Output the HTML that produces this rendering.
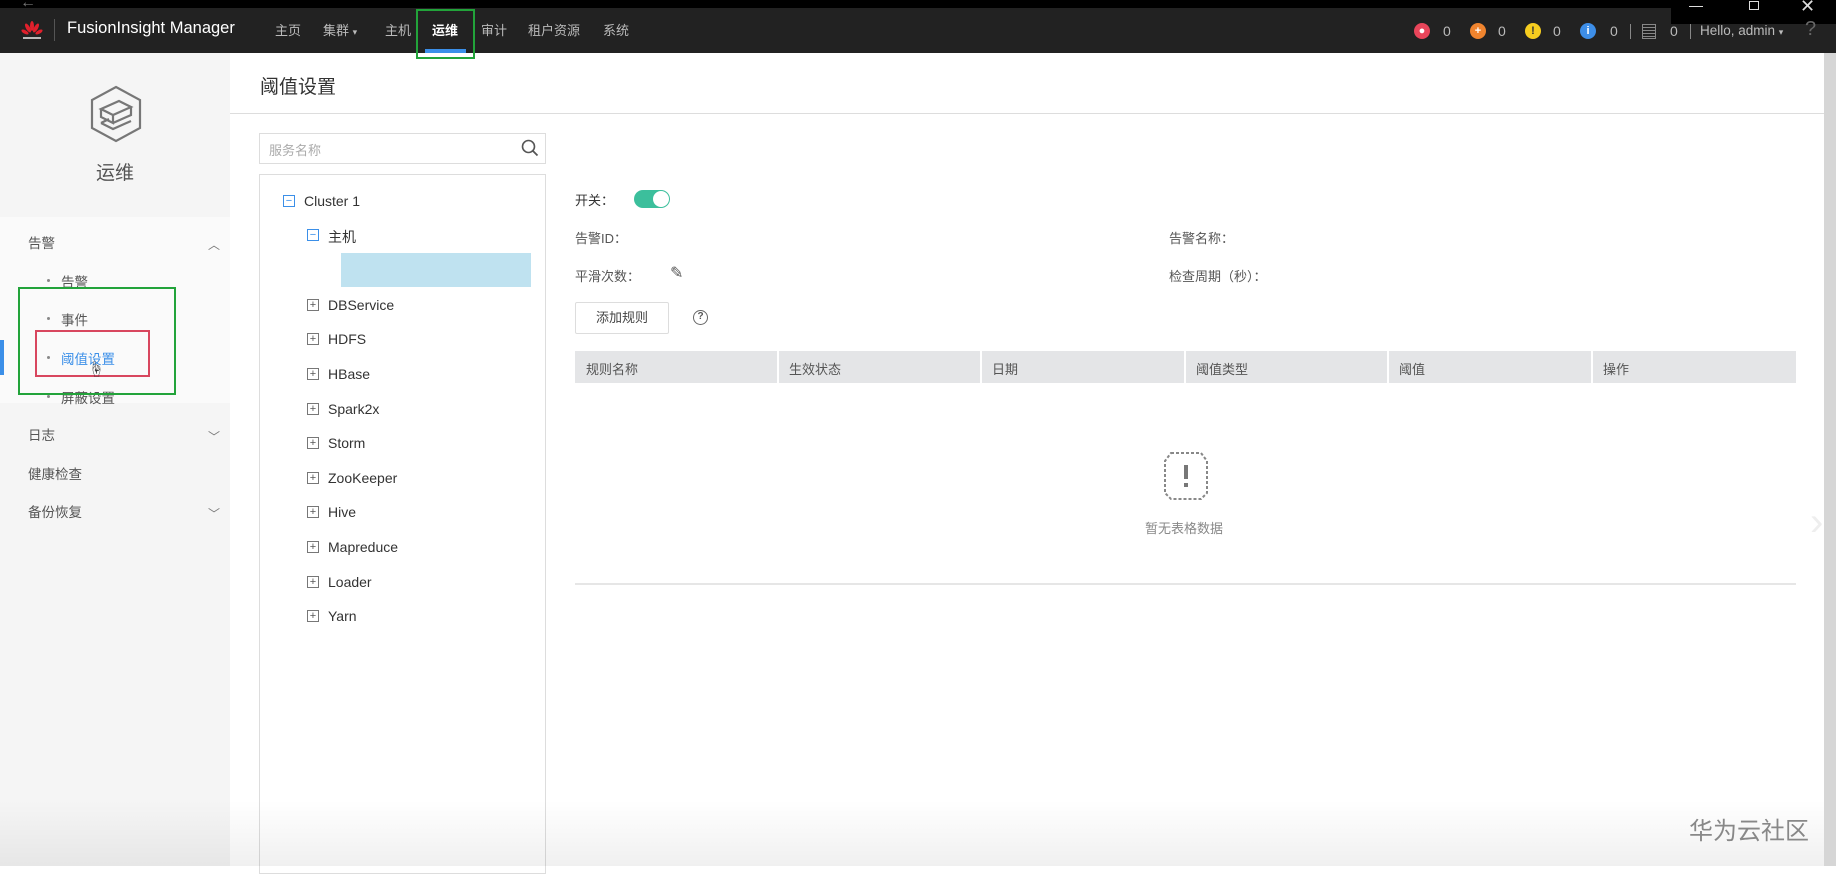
<!DOCTYPE html>
<html><head><meta charset="utf-8"><style>
*{margin:0;padding:0;box-sizing:border-box}
body{width:1836px;height:866px;overflow:hidden;background:#fff;font-family:"Liberation Sans","Noto Sans CJK SC",sans-serif;color:#444;position:relative;font-size:14px}
.a{position:absolute;white-space:nowrap}
.hdr{left:0;top:0;width:1836px;height:53px;background:#222}
.top{left:0;top:0;width:1836px;height:8px;background:#000}
.nav{color:#bbb;font-size:13px;top:20px}
.ic{width:16px;height:16px;border-radius:50%;top:23px;color:#fff;font-size:11px;text-align:center;line-height:16px;font-weight:bold}
.cnt{color:#bbb;font-size:14px;top:23px}
.side{left:0;top:53px;width:230px;height:813px;background:#f5f5f5}
.mi{font-size:13.5px;color:#555}
.dot{width:3px;height:3px;background:#888;border-radius:50%}
.tr{font-size:14px;color:#333}
.tb{width:12px;height:12px;border:1px solid #777;font-size:11px;line-height:10px;text-align:center;color:#555}
.lbl{font-size:13px;color:#555}
.th{font-size:13px;color:#555;top:359px}
.col{top:351px;width:2px;height:32px;background:#fff}
</style></head><body>
<div class="a hdr"></div>
<div class="a top"></div>
<div class="a" style="left:1671px;top:0;width:165px;height:24px;background:#000"></div>
<div class="a" style="left:1689px;top:6px;width:14px;height:1px;background:#ddd"></div>
<div class="a" style="left:1749px;top:1px;width:10px;height:9px;border:1px solid #ddd"></div>
<div class="a" style="left:1800px;top:-4px;color:#ddd;font-size:18px">✕</div>
<div class="a" style="left:20px;top:-6px;color:#777;font-size:16px">←</div>
<svg class="a" style="left:20px;top:20px" width="24" height="24" viewBox="0 0 24 24">
<g fill="#e0202c"><ellipse cx="12" cy="6" rx="2" ry="5"/><ellipse cx="8" cy="8" rx="2" ry="5" transform="rotate(-30 8 8)"/><ellipse cx="16" cy="8" rx="2" ry="5" transform="rotate(30 16 8)"/><ellipse cx="5" cy="12" rx="1.8" ry="4" transform="rotate(-60 5 12)"/><ellipse cx="19" cy="12" rx="1.8" ry="4" transform="rotate(60 19 12)"/></g>
<rect x="3" y="17" width="18" height="2" fill="#bbb"/></svg>
<div class="a" style="left:54px;top:19px;width:1px;height:22px;background:#555"></div>
<div class="a" style="left:67px;top:19px;color:#fff;font-size:16.5px">FusionInsight Manager</div>
<div class="a nav" style="left:275px">主页</div>
<div class="a nav" style="left:323px">集群 <span style="font-size:9px">▾</span></div>
<div class="a nav" style="left:385px">主机</div>
<div class="a nav" style="left:432px;color:#fff;font-weight:bold">运维</div>
<div class="a" style="left:425px;top:49px;width:41px;height:4px;background:#3b8fe8"></div>
<div class="a" style="left:416px;top:9px;width:59px;height:50px;border:2px solid #22a33a"></div>
<div class="a nav" style="left:481px">审计</div>
<div class="a nav" style="left:528px">租户资源</div>
<div class="a nav" style="left:603px">系统</div>
<div class="a ic" style="left:1414px;background:#e8455a">●</div><div class="a cnt" style="left:1443px">0</div>
<div class="a ic" style="left:1470px;background:#f0842e">+</div><div class="a cnt" style="left:1498px">0</div>
<div class="a ic" style="left:1525px;background:#f6cd1f;color:#333">!</div><div class="a cnt" style="left:1553px">0</div>
<div class="a ic" style="left:1580px;background:#3d8ee8">i</div><div class="a cnt" style="left:1610px">0</div>
<div class="a" style="left:1630px;top:24px;width:1px;height:15px;background:#888"></div>
<div class="a" style="left:1642px;top:24px;width:14px;height:15px;border:1px solid #888;background:repeating-linear-gradient(#222 0 2px,#888 2px 3px)"></div>
<div class="a cnt" style="left:1670px">0</div>
<div class="a" style="left:1690px;top:24px;width:1px;height:15px;background:#888"></div>
<div class="a cnt" style="left:1700px;font-size:13.5px">Hello, admin <span style="font-size:9px">▾</span></div>
<div class="a" style="left:1805px;top:18px;color:#666;font-size:20px">?</div>
<div class="a side"></div>
<div class="a" style="left:0;top:217px;width:230px;height:186px;background:#fafafa"></div>
<svg class="a" style="left:89px;top:85px" width="54" height="58" viewBox="0 0 54 58">
<g fill="none" stroke="#777" stroke-width="2.2"><polygon points="27,2 51,15 51,43 27,56 3,43 3,15"/>
<path d="M12,24 L30,16 L42,22 L24,30 Z M12,24 L12,32 L24,38 L24,30 M24,38 L42,30 L42,22 M12,38 L24,44 L42,36 M12,38 L20,34"/></g></svg>
<div class="a" style="left:96px;top:158px;font-size:19px;color:#555">运维</div>
<div class="a mi" style="left:28px;top:232px">告警</div>
<div class="a" style="left:208px;top:236px;color:#777;font-size:12px">︿</div>
<div class="a dot" style="left:47px;top:279px"></div><div class="a mi" style="left:61px;top:271px">告警</div>
<div class="a dot" style="left:47px;top:317px"></div><div class="a mi" style="left:61px;top:309px">事件</div>
<div class="a dot" style="left:47px;top:356px"></div><div class="a mi" style="left:61px;top:348px;color:#3b8fe8">阈值设置</div>
<div class="a dot" style="left:47px;top:395px"></div><div class="a mi" style="left:61px;top:387px">屏蔽设置</div>
<div class="a" style="left:0;top:340px;width:4px;height:35px;background:#3b8fe8"></div>
<div class="a" style="left:18px;top:287px;width:158px;height:108px;border:2px solid #22a33a"></div>
<div class="a" style="left:35px;top:330px;width:115px;height:47px;border:2px solid #d8465e"></div>
<div class="a" style="left:88px;top:356px;font-size:16px;color:#333">☝</div>
<div class="a mi" style="left:28px;top:424px">日志</div><div class="a" style="left:208px;top:428px;color:#777;font-size:12px">﹀</div>
<div class="a mi" style="left:28px;top:463px">健康检查</div>
<div class="a mi" style="left:28px;top:501px">备份恢复</div><div class="a" style="left:208px;top:505px;color:#777;font-size:12px">﹀</div>
<div class="a" style="left:260px;top:72px;font-size:19px;color:#333">阈值设置</div>
<div class="a" style="left:230px;top:113px;width:1596px;height:1px;background:#ddd"></div>
<div class="a" style="left:259px;top:133px;width:287px;height:31px;border:1px solid #ddd"></div>
<div class="a" style="left:269px;top:140px;font-size:13px;color:#aaa">服务名称</div>
<svg class="a" style="left:521px;top:139px" width="18" height="18" viewBox="0 0 18 18"><circle cx="7.5" cy="7.5" r="6" fill="none" stroke="#555" stroke-width="1.6"/><path d="M12 12 L16.5 16.5" stroke="#555" stroke-width="1.8"/></svg>
<div class="a" style="left:259px;top:174px;width:287px;height:700px;border:1px solid #ddd"></div>
<div class="a tb" style="left:283px;top:195px;border-color:#3b8fe8;color:#3b8fe8">−</div><div class="a tr" style="left:304px;top:193px">Cluster 1</div>
<div class="a tb" style="left:307px;top:229px;border-color:#3b8fe8;color:#3b8fe8">−</div><div class="a tr" style="left:328px;top:227px">主机</div>
<div class="a" style="left:341px;top:253px;width:190px;height:34px;background:#bfe2f0"></div>
<div class="a tb" style="left:307px;top:299px">+</div><div class="a tr" style="left:328px;top:297px">DBService</div>
<div class="a tb" style="left:307px;top:333px">+</div><div class="a tr" style="left:328px;top:331px">HDFS</div>
<div class="a tb" style="left:307px;top:368px">+</div><div class="a tr" style="left:328px;top:366px">HBase</div>
<div class="a tb" style="left:307px;top:403px">+</div><div class="a tr" style="left:328px;top:401px">Spark2x</div>
<div class="a tb" style="left:307px;top:437px">+</div><div class="a tr" style="left:328px;top:435px">Storm</div>
<div class="a tb" style="left:307px;top:472px">+</div><div class="a tr" style="left:328px;top:470px">ZooKeeper</div>
<div class="a tb" style="left:307px;top:506px">+</div><div class="a tr" style="left:328px;top:504px">Hive</div>
<div class="a tb" style="left:307px;top:541px">+</div><div class="a tr" style="left:328px;top:539px">Mapreduce</div>
<div class="a tb" style="left:307px;top:576px">+</div><div class="a tr" style="left:328px;top:574px">Loader</div>
<div class="a tb" style="left:307px;top:610px">+</div><div class="a tr" style="left:328px;top:608px">Yarn</div>
<div class="a lbl" style="left:575px;top:190px;color:#333">开关：</div>
<div class="a" style="left:634px;top:190px;width:36px;height:18px;border-radius:9px;background:#3cbf9c"></div>
<div class="a" style="left:653px;top:191px;width:16px;height:16px;border-radius:50%;background:#fff"></div>
<div class="a lbl" style="left:575px;top:228px">告警ID：</div>
<div class="a lbl" style="left:1169px;top:228px">告警名称：</div>
<div class="a lbl" style="left:575px;top:266px">平滑次数：</div>
<div class="a" style="left:670px;top:263px;font-size:16px;color:#555">✎</div>
<div class="a lbl" style="left:1169px;top:266px">检查周期（秒）：</div>
<div class="a" style="left:575px;top:302px;width:94px;height:32px;border:1px solid #ddd;border-radius:2px;font-size:13px;color:#444;text-align:center;line-height:30px">添加规则</div>
<div class="a" style="left:693px;top:310px;width:15px;height:15px;border:1.5px solid #666;border-radius:50%;font-size:10px;text-align:center;line-height:12px;color:#555;font-weight:bold">?</div>
<div class="a" style="left:575px;top:351px;width:1221px;height:32px;background:#e4e5e7"></div>
<div class="a col" style="left:777px"></div><div class="a col" style="left:980px"></div><div class="a col" style="left:1184px"></div><div class="a col" style="left:1387px"></div><div class="a col" style="left:1591px"></div>
<div class="a th" style="left:586px">规则名称</div>
<div class="a th" style="left:789px">生效状态</div>
<div class="a th" style="left:992px">日期</div>
<div class="a th" style="left:1196px">阈值类型</div>
<div class="a th" style="left:1399px">阈值</div>
<div class="a th" style="left:1603px">操作</div>
<svg class="a" style="left:1161px;top:449px" width="50" height="52" viewBox="0 0 50 52"><path d="M10 4 H40 L46 12 V44 L40 50 H10 L4 44 V12 Z" fill="none" stroke="#888" stroke-width="2" stroke-dasharray="3 2"/><rect x="23" y="16" width="4" height="14" fill="#777"/><rect x="23" y="34" width="4" height="4" fill="#777"/></svg>
<div class="a" style="left:1145px;top:518px;font-size:13px;color:#888">暂无表格数据</div>
<div class="a" style="left:575px;top:583px;width:1221px;height:2px;background:#e6e6e6"></div>
<div class="a" style="left:1824px;top:53px;width:12px;height:813px;background:#d6d6d6"></div>
<div class="a" style="left:1810px;top:500px;font-size:40px;color:#eee">›</div>
<div class="a" style="left:0;top:800px;width:1824px;height:66px;background:linear-gradient(rgba(0,0,0,0),rgba(0,0,0,0.06))"></div>
<div class="a" style="left:1689px;top:811px;font-size:24px;color:#888">华为云社区</div>
</body></html>
